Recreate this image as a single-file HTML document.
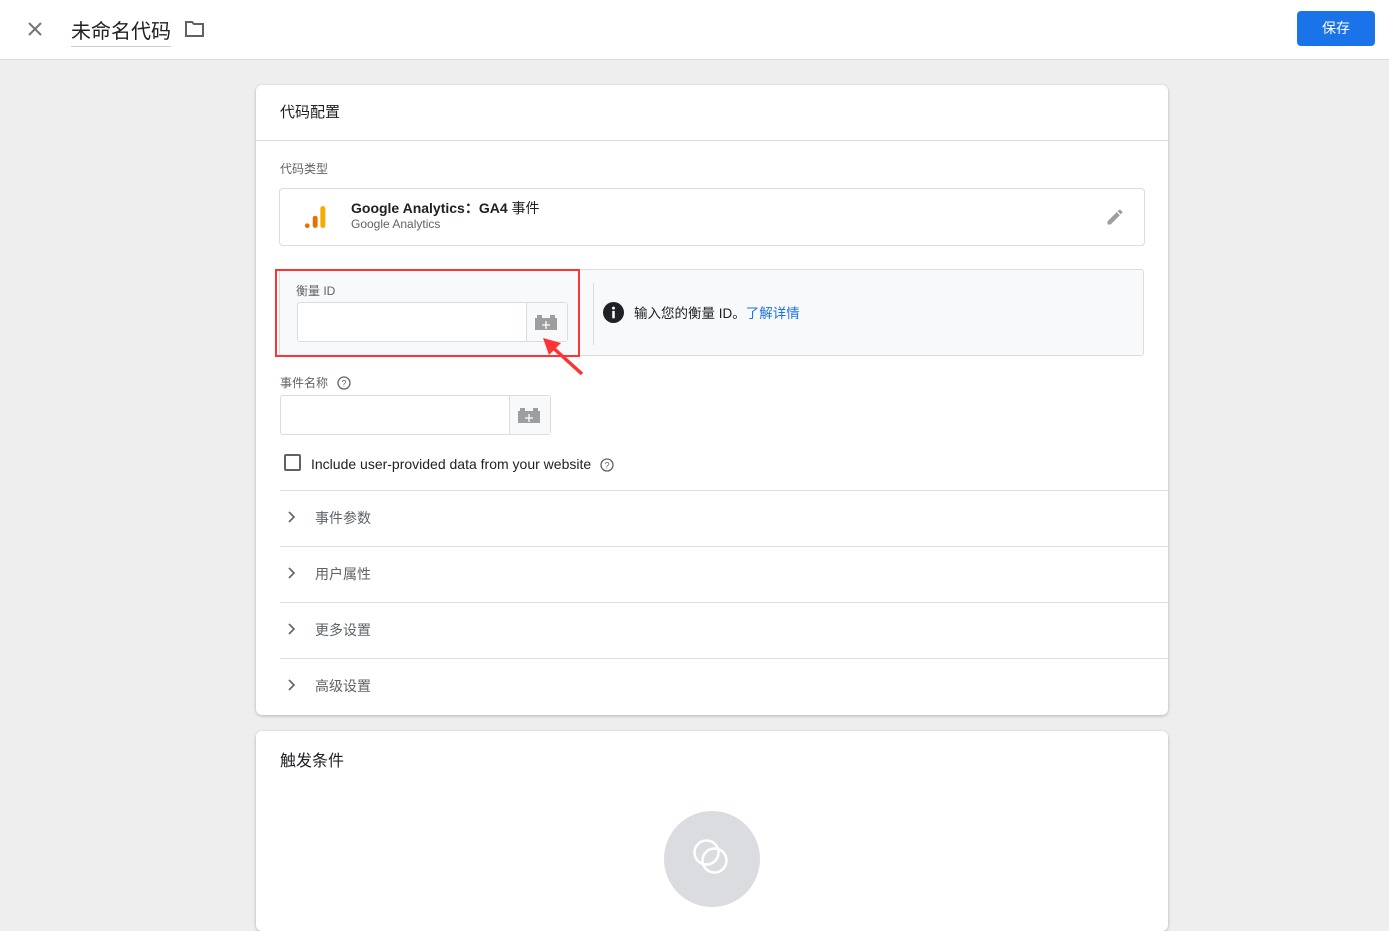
<!DOCTYPE html>
<html><head><meta charset="utf-8"><style>
*{box-sizing:border-box;margin:0;padding:0}
body{width:1389px;height:889px;overflow:hidden;background:#eeeeee;font-family:"Liberation Sans","Noto Sans CJK SC",sans-serif;color:#202124;position:relative}
.a{position:absolute}
.top{left:0;top:0;width:1389px;height:60px;background:#fff;border-bottom:1px solid #dadce0}
.card{background:#fff;border-radius:6px;box-shadow:0 1px 3px rgba(0,0,0,.25)}
.row{left:280px;width:888px;height:56px;border-top:1px solid #e0e0e0}
.row span{position:absolute;left:35px;top:17px;font-size:14px;color:#5f6368}
.row svg{position:absolute;left:6px;top:20px}
</style></head><body>
<div class="a top">
 <svg class="a" style="left:27px;top:21px" width="16" height="16" viewBox="0 0 16 16"><path d="M2 2L14 14M14 2L2 14" stroke="#757575" stroke-width="2"/></svg>
 <div class="a" style="left:71px;top:15px;font-size:20px;color:#202124;border-bottom:1px solid #ccc;padding-bottom:3px;height:32px">未命名代码</div>
 <svg class="a" style="left:184px;top:19px" width="22" height="20" viewBox="0 0 22 20"><path d="M2 3h6l2 2h9v12H2z" fill="none" stroke="#616161" stroke-width="2"/></svg>
 <div class="a" style="left:1297px;top:11px;width:78px;height:35px;background:#1a73e8;border-radius:4px;color:#fff;font-size:14px;text-align:center;line-height:35px">保存</div>
</div>
<div class="a card" style="left:256px;top:85px;width:912px;height:630px"></div>
<div class="a" style="left:256px;top:140px;width:912px;height:1px;background:#dadce0"></div>
<div class="a" style="left:280px;top:101px;font-size:15px">代码配置</div>
<div class="a" style="left:280px;top:160px;font-size:12px;color:#5f6368">代码类型</div>
<div class="a" style="left:279px;top:188px;width:866px;height:58px;border:1px solid #dadce0;border-radius:4px"></div>
<svg class="a" style="left:304px;top:205px" width="24" height="24" viewBox="0 0 22 22"><circle cx="3" cy="19" r="2.2" fill="#e37400"/><rect x="8" y="10" width="4.5" height="11" rx="2" fill="#e37400"/><rect x="15" y="1" width="4.5" height="20" rx="2" fill="#f9ab00"/></svg>
<div class="a" style="left:351px;top:198px;font-size:14px;font-weight:bold;color:#202124">Google Analytics：GA4 <span style="font-weight:normal">事件</span></div>
<div class="a" style="left:351px;top:217px;font-size:12px;color:#5f6368">Google Analytics</div>
<svg class="a" style="left:1105px;top:207px" width="20" height="20" viewBox="0 0 24 24"><path d="M3 17.25V21h3.75L17.81 9.94l-3.75-3.75L3 17.25zM20.71 7.04a1 1 0 000-1.41l-2.34-2.34a1 1 0 00-1.41 0l-1.83 1.83 3.75 3.75 1.83-1.83z" fill="#9e9e9e"/></svg>
<div class="a" style="left:279px;top:269px;width:865px;height:87px;background:#f8f9fa;border:1px solid #dadce0;border-radius:3px"></div>
<div class="a" style="left:593px;top:283px;width:1px;height:62px;background:#dadce0"></div>
<div class="a" style="left:296px;top:282px;font-size:12px;color:#5f6368">衡量 ID</div>
<div class="a" style="left:297px;top:302px;width:271px;height:40px;background:#fff;border:1px solid #dadce0;border-radius:3px"></div>
<div class="a" style="left:526px;top:303px;width:41px;height:38px;background:#f8f9fa;border-left:1px solid #dadce0"></div>
<svg class="a" style="left:535px;top:315px" width="22" height="15" viewBox="0 0 22 15"><rect x="0" y="3" width="22" height="12" fill="#9e9e9e"/><rect x="2" y="0" width="5" height="4" fill="#9e9e9e"/><rect x="15" y="0" width="5" height="4" fill="#9e9e9e"/><path d="M11 6v8M7 10h8" stroke="#fff" stroke-width="1.3"/></svg>
<div class="a" style="left:275px;top:269px;width:305px;height:88px;border:2px solid #f33"></div>
<svg class="a" style="left:540px;top:335px" width="45" height="42" viewBox="0 0 45 42"><path d="M42 39L10 10" stroke="#f33" stroke-width="3.5"/><path d="M3 3L21 8L9 20z" fill="#f33"/></svg>
<svg class="a" style="left:603px;top:302px" width="21" height="21" viewBox="0 0 20 20"><circle cx="10" cy="10" r="10" fill="#202124"/><rect x="8.8" y="8.5" width="2.4" height="7" fill="#fff"/><circle cx="10" cy="5.8" r="1.4" fill="#fff"/></svg>
<div class="a" style="left:634px;top:302px;font-size:13.5px;color:#202124">输入您的衡量 ID。<span style="color:#1a73e8">了解详情</span></div>
<div class="a" style="left:280px;top:374px;font-size:12px;color:#5f6368">事件名称</div>
<svg class="a" style="left:337px;top:376px" width="14" height="14" viewBox="0 0 14 14"><circle cx="7" cy="7" r="6" fill="none" stroke="#5f6368" stroke-width="1.3"/><text x="7" y="10.5" font-size="9" text-anchor="middle" fill="#5f6368" font-family="Liberation Sans">?</text></svg>
<div class="a" style="left:280px;top:395px;width:271px;height:40px;background:#fff;border:1px solid #dadce0;border-radius:3px"></div>
<div class="a" style="left:509px;top:396px;width:41px;height:38px;background:#f8f9fa;border-left:1px solid #dadce0"></div>
<svg class="a" style="left:518px;top:408px" width="22" height="15" viewBox="0 0 22 15"><rect x="0" y="3" width="22" height="12" fill="#9e9e9e"/><rect x="2" y="0" width="5" height="4" fill="#9e9e9e"/><rect x="15" y="0" width="5" height="4" fill="#9e9e9e"/><path d="M11 6v8M7 10h8" stroke="#fff" stroke-width="1.3"/></svg>
<div class="a" style="left:284px;top:454px;width:17px;height:17px;border:2px solid #5f6368;border-radius:2px"></div>
<div class="a" style="left:311px;top:456px;font-size:14px;color:#202124">Include user-provided data from your website</div>
<svg class="a" style="left:600px;top:458px" width="14" height="14" viewBox="0 0 14 14"><circle cx="7" cy="7" r="6" fill="none" stroke="#5f6368" stroke-width="1.3"/><text x="7" y="10.5" font-size="9" text-anchor="middle" fill="#5f6368" font-family="Liberation Sans">?</text></svg>
<div class="a row" style="top:490px"><svg width="10" height="12" viewBox="0 0 10 12"><path d="M3 1l5 5-5 5" fill="none" stroke="#5f6368" stroke-width="1.6"/></svg><span>事件参数</span></div>
<div class="a row" style="top:546px"><svg width="10" height="12" viewBox="0 0 10 12"><path d="M3 1l5 5-5 5" fill="none" stroke="#5f6368" stroke-width="1.6"/></svg><span>用户属性</span></div>
<div class="a row" style="top:602px"><svg width="10" height="12" viewBox="0 0 10 12"><path d="M3 1l5 5-5 5" fill="none" stroke="#5f6368" stroke-width="1.6"/></svg><span>更多设置</span></div>
<div class="a row" style="top:658px"><svg width="10" height="12" viewBox="0 0 10 12"><path d="M3 1l5 5-5 5" fill="none" stroke="#5f6368" stroke-width="1.6"/></svg><span>高级设置</span></div>
<div class="a card" style="left:256px;top:731px;width:912px;height:200px"></div>
<div class="a" style="left:280px;top:747px;font-size:16px">触发条件</div>
<div class="a" style="left:664px;top:811px;width:96px;height:96px;border-radius:50%;background:#dadce0"></div>
<svg class="a" style="left:688px;top:834px" width="48" height="48" viewBox="0 0 48 48"><circle cx="18.5" cy="18.5" r="12" fill="none" stroke="#fff" stroke-width="2.5"/><circle cx="26.5" cy="26.5" r="12" fill="none" stroke="#fff" stroke-width="2.5"/></svg>
</body></html>
